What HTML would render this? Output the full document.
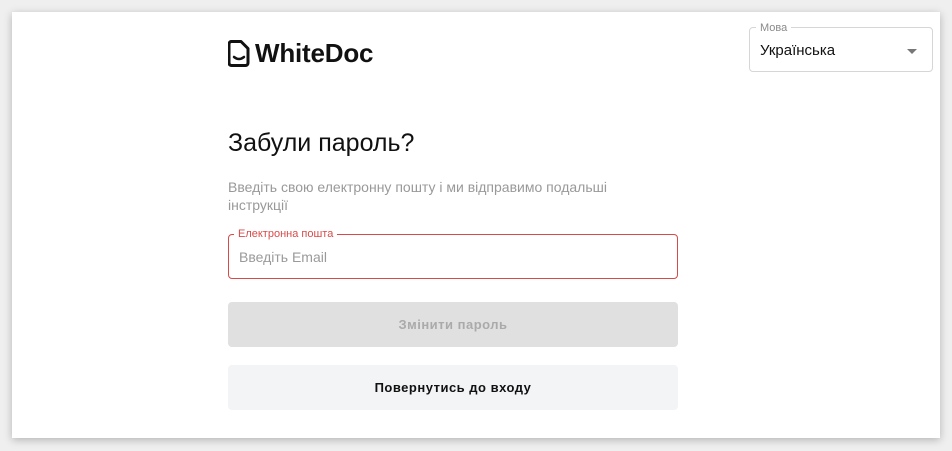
<!DOCTYPE html>
<html><head><meta charset="utf-8"><style>
*{box-sizing:border-box;margin:0;padding:0}
body{width:952px;height:451px;background:#efefef;font-family:"Liberation Sans",Arial,sans-serif;position:relative;overflow:hidden}
.card{position:absolute;left:12px;top:12px;width:928px;height:426px;background:#fff;box-shadow:0 2px 8px rgba(0,0,0,.25)}
.logo{position:absolute;left:228px;top:38px;display:flex;align-items:center}
.logo span{font-weight:bold;font-size:26px;color:#111;margin-left:5px;letter-spacing:-0.2px}
.sel{position:absolute;left:749px;top:27px;width:184px;height:45px;border:1px solid #d6d6d6;border-radius:4px}
.sel .lab{position:absolute;left:6px;top:-5px;background:#fff;padding:0 4px;font-size:11px;line-height:11px;color:#8a8a8a}
.sel .val{position:absolute;left:10px;top:14px;font-size:15px;color:#111}
.sel .arr{position:absolute;right:15px;top:21px;width:0;height:0;border-left:5px solid transparent;border-right:5px solid transparent;border-top:5px solid #777}
h1{position:absolute;left:228px;top:129px;font-weight:normal;font-size:25px;color:#111}
.desc{position:absolute;left:228px;top:178px;width:440px;font-size:14px;line-height:18px;color:#999}
.inp{position:absolute;left:228px;top:234px;width:450px;height:45px;border:1px solid #d84a4a;border-radius:4px}
.inp .lab{position:absolute;left:5px;top:-7px;background:#fff;padding:0 4px;font-size:11px;color:#d84a4a}
.inp .ph{position:absolute;left:10px;top:14px;font-size:14px;color:#9a9a9a}
.b1{position:absolute;left:228px;top:302px;width:450px;height:45px;background:#e0e0e0;border-radius:4px;text-align:center;line-height:45px;font-size:13px;font-weight:bold;color:#aaa;letter-spacing:.5px}
.b2{position:absolute;left:228px;top:365px;width:450px;height:45px;background:#f3f4f6;border-radius:4px;text-align:center;line-height:45px;font-size:13px;font-weight:bold;color:#111;letter-spacing:.5px}
</style></head><body>
<div class="card"></div>
<div class="logo">
<svg width="22" height="27" viewBox="0 0 22 27"><path d="M3 1.5h10l7 7V23a2.5 2.5 0 0 1-2.5 2.5h-14A2.5 2.5 0 0 1 1 23V4a2.5 2.5 0 0 1 2-2.5z" fill="none" stroke="#111" stroke-width="3" stroke-linejoin="round"/><path d="M6 17q5 4 10 0" fill="none" stroke="#111" stroke-width="2.5" stroke-linecap="round"/></svg>
<span>WhiteDoc</span></div>
<div class="sel"><div class="lab">Мова</div><div class="val">Українська</div><div class="arr"></div></div>
<h1>Забули пароль?</h1>
<div class="desc">Введіть свою електронну пошту і ми відправимо подальші інструкції</div>
<div class="inp"><div class="lab">Електронна пошта</div><div class="ph">Введіть Email</div></div>
<div class="b1">Змінити пароль</div>
<div class="b2">Повернутись до входу</div>
</body></html>
